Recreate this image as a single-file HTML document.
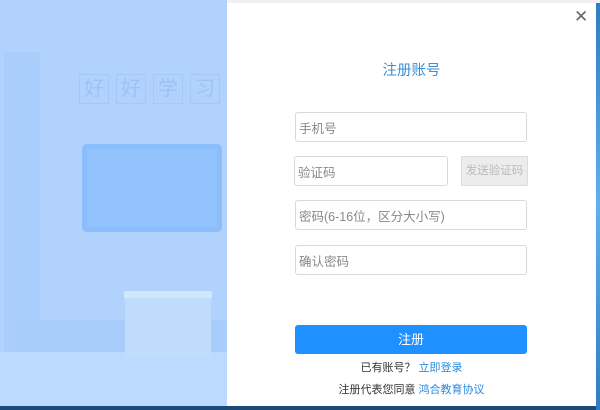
<!DOCTYPE html>
<html><head><meta charset="utf-8"><style>
*{margin:0;padding:0;box-sizing:border-box}
body{width:600px;height:410px;overflow:hidden;background:#1b4a78;font-family:"Liberation Sans","Noto Sans CJK SC",sans-serif;position:relative}
.a{position:absolute}
.in{position:absolute;border:1px solid #d9d9d9;border-radius:3px;background:#fff;font-size:12.5px;color:#888;padding-left:3px;display:flex;align-items:center}
</style></head><body>
<div class="a" style="left:0;top:0;width:600px;height:404px;background:#3f8fd8"></div>
<div class="a" style="left:596px;top:0;width:4px;height:410px;background:linear-gradient(#2d7cc4,#5fb0f0,#2d7cc4)"></div>
<div class="a" style="left:157px;top:0;width:443px;height:3px;background:#f0f0f0"></div>
<div class="a" style="left:0;top:0;width:227px;height:406px;background:#b0d2fd;overflow:hidden">
 <div class="a" style="left:4px;top:52px;width:36px;height:300px;background:#aacefc"></div>
 <div class="a" style="left:79px;top:74px;width:30px;height:30px;border:1px solid #a4c9f7;color:#9cc3f4;font-size:20px;text-align:center;line-height:28px">好</div>
 <div class="a" style="left:116px;top:74px;width:30px;height:30px;border:1px solid #a4c9f7;color:#9cc3f4;font-size:20px;text-align:center;line-height:28px">好</div>
 <div class="a" style="left:153px;top:74px;width:30px;height:30px;border:1px solid #a4c9f7;color:#9cc3f4;font-size:20px;text-align:center;line-height:28px">学</div>
 <div class="a" style="left:190px;top:74px;width:30px;height:30px;border:1px solid #a4c9f7;color:#9cc3f4;font-size:20px;text-align:center;line-height:28px">习</div>
 <div class="a" style="left:82px;top:144px;width:140px;height:88px;background:#92c3fd;border:5px solid #89bdfb;border-radius:5px"></div>
 <div class="a" style="left:14px;top:320px;width:213px;height:32px;background:#a8cdfb"></div>
 <div class="a" style="left:0;top:352px;width:227px;height:54px;background:#bcdafd"></div>
 <div class="a" style="left:124px;top:291px;width:88px;height:7px;background:#d2e6fe"></div>
 <div class="a" style="left:125px;top:298px;width:86px;height:60px;background:#c0dcfd"></div>
</div>
<div class="a" style="left:227px;top:3px;width:369px;height:403px;background:#fff"></div>
<div class="a" style="left:574px;top:7px;font-size:17px;color:#666">✕</div>
<div class="a" style="left:227px;top:59px;width:369px;text-align:center;font-size:14.5px;color:#3a8fd6">注册账号</div>
<div class="in" style="left:295px;top:112px;width:232px;height:30px">手机号</div>
<div class="in" style="left:294px;top:156px;width:154px;height:30px">验证码</div>
<div class="a" style="left:461px;top:156px;width:67px;height:30px;background:#ececec;border:1px solid #ddd;color:#bbb;font-size:11.5px;text-align:center;line-height:28px">发送验证码</div>
<div class="in" style="left:295px;top:200px;width:232px;height:30px">密码(6-16位，区分大小写)</div>
<div class="in" style="left:295px;top:245px;width:232px;height:30px">确认密码</div>
<div class="a" style="left:295px;top:325px;width:232px;height:29px;background:#1e90ff;border-radius:3px;color:#fff;font-size:13px;text-align:center;line-height:29px">注册</div>
<div class="a" style="left:227px;top:359px;width:369px;text-align:center;font-size:11px;color:#333">已有账号？ <span style="color:#2a8ae0">立即登录</span></div>
<div class="a" style="left:227px;top:381px;width:369px;text-align:center;font-size:11px;color:#333">注册代表您同意 <span style="color:#2a8ae0">鸿合教育协议</span></div>
</body></html>
